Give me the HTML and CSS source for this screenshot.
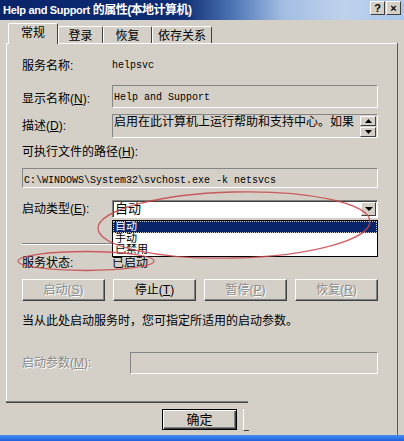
FILE: index.html
```html
<!DOCTYPE html>
<html lang="zh">
<head>
<meta charset="utf-8">
<title>Help and Support 的属性(本地计算机)</title>
<link rel="stylesheet" href="styles.css">
</head>
<body>
<div class="window">
  <div class="titlebar">
    <span class="title">Help and Support <span class="title-cjk">的属性(本地计算机)</span></span>
    <div class="tb-btns"><span class="tb-btn">?</span><span class="tb-btn">×</span></div>
  </div>
  <div class="tabs">
    <div class="tab active w50">常规</div>
    <div class="tab w45">登录</div>
    <div class="tab w49">恢复</div>
    <div class="tab w60">依存关系</div>
  </div>
  <div class="sheet">
    <div class="panel">
      <div class="row r-info">
        <span class="lbl">服务名称:</span>
        <span class="mono">helpsvc</span>
      </div>
      <div class="row r-display">
        <span class="lbl lbl-low">显示名称(<u>N</u>):</span>
        <div class="box box-display"><span class="mono">Help and Support</span></div>
      </div>
      <div class="row r-desc">
        <span class="lbl lbl-mid">描述(<u>D</u>):</span>
        <div class="box box-desc">
          <span class="desc-text">启用在此计算机上运行帮助和支持中心。如果</span>
          <div class="spin">
            <span class="spin-btn"><svg width="7" height="4" viewBox="0 0 7 4"><path d="M3.5 0 L7 4 L0 4 Z" fill="#000"/></svg></span>
            <span class="spin-btn"><svg width="7" height="4" viewBox="0 0 7 4"><path d="M0 0 L7 0 L3.5 4 Z" fill="#000"/></svg></span>
          </div>
        </div>
      </div>
      <div class="row r-pathlbl">可执行文件的路径(<u>H</u>):</div>
      <div class="box box-path"><span class="mono">C:\WINDOWS\System32\svchost.exe -k netsvcs</span></div>
      <div class="row r-start">
        <span class="lbl">启动类型(<u>E</u>):</span>
        <div class="combo">
          <span class="combo-text">自动</span>
          <span class="combo-btn"><svg width="8" height="4" viewBox="0 0 8 4"><path d="M0 0 L8 0 L4 4 Z" fill="#000"/></svg></span>
          <div class="droplist">
            <div class="opt sel">自动</div>
            <div class="opt">手动</div>
            <div class="opt">已禁用</div>
          </div>
        </div>
      </div>
      <div class="sep"></div>
      <div class="row r-status">
        <span class="lbl">服务状态:</span>
        <span>已启动</span>
      </div>
      <div class="btn-row">
        <span class="btn disabled">启动(<u>S</u>)</span>
        <span class="btn">停止(<u>T</u>)</span>
        <span class="btn disabled">暂停(<u>P</u>)</span>
        <span class="btn disabled">恢复(<u>R</u>)</span>
      </div>
      <div class="row r-hint">当从此处启动服务时，您可指定所适用的启动参数。</div>
      <div class="row r-param">
        <span class="lbl lbl-param disabled">启动参数(<u>M</u>):</span>
        <div class="box box-param"></div>
      </div>
    </div>
    <div class="panel-end"></div>
    <div class="footer">
      <span class="btn btn-ok">确定</span>
      <span class="btn-cut"></span>
    </div>
  </div>
  <div class="taskbar"></div>
  <svg class="marks" width="404" height="441" viewBox="0 0 404 441">
    <ellipse cx="234" cy="225" rx="136" ry="33" transform="rotate(-1.5 234 225)" fill="none" stroke="#c8464a" stroke-width="1.3" opacity="0.85"/>
    <ellipse cx="86" cy="261" rx="68" ry="9.5" fill="none" stroke="#c8464a" stroke-width="1.3" opacity="0.85"/>
  </svg>
</div>
</body>
</html>
```
FILE: styles.css
```css
* { box-sizing: border-box; }
html, body { margin: 0; padding: 0; }
body {
  width: 404px;
  height: 441px;
  overflow: hidden;
  background: #d4d0c8;
  font-family: "Liberation Sans", "Noto Sans CJK SC", sans-serif;
  font-size: 12px;
  line-height: 14px;
  color: #000;
}
u { text-decoration: underline; }

.window {
  position: relative;
  width: 404px;
  height: 441px;
  display: flex;
  flex-direction: column;
}

.titlebar {
  height: 20px;
  flex: none;
  display: flex;
  justify-content: space-between;
  align-items: center;
  padding: 0 3px 0 3px;
  background: linear-gradient(to right, #0a246a 0%, #0e2d73 45%, #4f77b6 58%, #a3bde2 70%, #bfd2ec 85%, #a9c6ec 100%);
}
.title {
  color: #fff;
  font-weight: bold;
  font-size: 11px;
  letter-spacing: -0.3px;
}
.title-cjk { font-size: 12px; letter-spacing: -0.5px; }
.tb-btns {
  display: flex;
  gap: 1px;
  align-self: flex-start;
  margin-top: 1px;
}
.tb-btn {
  width: 15px;
  height: 14px;
  background: #d4d0c8;
  border: 1px solid;
  border-color: #fff #404040 #404040 #fff;
  font: bold 11px/12px "Liberation Sans", sans-serif;
  display: flex;
  align-items: center;
  justify-content: center;
}

.tabs {
  height: 23px;
  flex: none;
  display: flex;
  align-items: flex-end;
  padding-left: 8px;
}
.tab {
  height: 17px;
  border-top: 1px solid #fff;
  border-left: 1px solid #fff;
  border-right: 1px solid #404040;
  border-radius: 2px 2px 0 0;
  display: flex;
  align-items: center;
  justify-content: center;
  padding-top: 1px;
}
.tab.active {
  height: 21px;
  margin-bottom: -1px;
  background: #d4d0c8;
  position: relative;
  z-index: 1;
  padding-top: 0;
  padding-bottom: 3px;
}
.w50 { width: 50px; }
.w45 { width: 45px; }
.w49 { width: 49px; }
.w60 { width: 60px; }

.sheet {
  flex: 1;
  margin-left: 6px;
  width: 392px;
  border-right: 1px solid #5a5a5a;
  display: flex;
  flex-direction: column;
}
.panel {
  height: 358px;
  flex: none;
  border-top: 1px solid #fff;
  border-left: 1px solid #fff;
  padding-left: 15px;
}
.panel-end {
  width: 242px;
  height: 2px;
  border-top: 1px solid #808080;
  border-bottom: 1px solid #404040;
}
.footer {
  display: flex;
  padding-top: 6px;
  padding-left: 156px;
}

.row { display: flex; }
.lbl { width: 90px; flex: none; }
.mono {
  font-family: "Liberation Mono", monospace;
  font-size: 10px;
  line-height: 12px;
}

.r-info { margin-top: 15px; height: 14px; align-items: center; }

.box {
  border: 1px solid;
  border-color: #868686 #fff #fff #868686;
  background: #d4d0c8;
}

.r-display { margin-top: 12px; align-items: flex-end; }
.lbl-low { padding-bottom: 2px; }
.box-display {
  width: 266px;
  height: 23px;
  padding: 3px 1px;
}

.r-desc { margin-top: 6px; align-items: center; }
.box-desc {
  width: 266px;
  height: 24px;
  display: flex;
  justify-content: space-between;
  align-items: flex-start;
  padding: 0 0 0 1px;
}
.desc-text { line-height: 15px; }
.spin {
  display: flex;
  flex-direction: column;
  gap: 1px;
  margin-top: 1px;
  margin-right: 1px;
}
.spin-btn {
  width: 16px;
  height: 10px;
  background: #d4d0c8;
  border: 1px solid;
  border-color: #fff #404040 #404040 #fff;
  display: flex;
  align-items: center;
  justify-content: center;
}

.r-pathlbl { margin-top: 7px; height: 14px; align-items: center; }
.box-path {
  margin-top: 9px;
  width: 356px;
  height: 20px;
  padding: 3px 0 0 1px;
}

.r-start { margin-top: 12px; align-items: center; }
.combo {
  position: relative;
  width: 266px;
  height: 18px;
  background: #fff;
  border: 1px solid;
  border-color: #808080 #fff #fff #808080;
  box-shadow: inset 1px 1px #404040;
  display: flex;
  align-items: center;
  justify-content: space-between;
  padding-left: 2px;
}
.combo-text { font-size: 13px; }
.combo-btn {
  width: 15px;
  height: 14px;
  margin-right: 1px;
  background: #d4d0c8;
  border: 1px solid;
  border-color: #fff #404040 #404040 #fff;
  display: flex;
  align-items: center;
  justify-content: center;
}
.droplist {
  position: absolute;
  top: 19px;
  left: -1px;
  width: 266px;
  height: 37px;
  background: #fff;
  border: 1px solid #000;
  z-index: 2;
}
.opt {
  height: 11.6px;
  line-height: 11px;
  font-size: 11px;
  padding-left: 2px;
  overflow: hidden;
}
.opt.sel {
  background: #0a246a;
  color: #fff;
  outline: 1px dotted #c8c8c8;
  outline-offset: -1px;
}

.sep {
  margin-top: 25px;
  width: 356px;
  height: 2px;
  border-top: 1px solid #808080;
  border-bottom: 1px solid #fff;
}

.r-status { margin-top: 12px; height: 12px; align-items: center; line-height: 12px; }

.btn-row {
  margin-top: 10px;
  width: 356px;
  display: flex;
  justify-content: space-between;
}
.btn {
  width: 83px;
  height: 22px;
  background: #d4d0c8;
  border: 1px solid;
  border-color: #fff #404040 #404040 #fff;
  box-shadow: inset -1px -1px #808080;
  display: flex;
  align-items: center;
  justify-content: center;
}
.disabled {
  color: #8a8a8a;
  text-shadow: 1px 1px #fff;
}

.r-hint { margin-top: 13px; height: 14px; align-items: center; }

.r-param { margin-top: 24px; align-items: center; }
.lbl-param { width: 108px; }
.box-param {
  width: 248px;
  height: 22px;
}

.btn-ok {
  width: 75px;
  height: 21px;
  border: 1px solid #000;
  box-shadow: inset 1px 1px #fff, inset -1px -1px #404040, inset -2px -2px #808080;
  font-size: 13px;
}
.btn-cut {
  margin-left: 6px;
  width: 6px;
  height: 22px;
  border-left: 1px solid #fff;
  border-bottom: 1px solid #404040;
}

.taskbar {
  height: 6px;
  flex: none;
  background: linear-gradient(to bottom, #4a8ef2, #1c5fd8);
}

.marks {
  position: absolute;
  left: 0;
  top: 0;
  pointer-events: none;
  z-index: 5;
}
```
